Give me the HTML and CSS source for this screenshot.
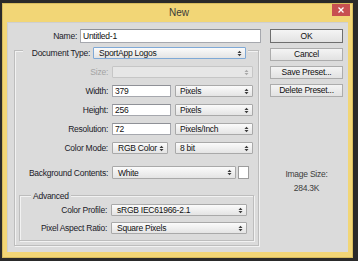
FILE: index.html
```html
<!DOCTYPE html>
<html>
<head>
<meta charset="utf-8">
<link rel="stylesheet" href="styles.css">
</head>
<body>
<div class="window">
  <div class="titlebar">
    <span></span>
    <span class="title">New</span>
    <span class="close"><svg width="6" height="6" viewBox="0 0 6 6"><path d="M0.5 0.5L5.5 5.5M5.5 0.5L0.5 5.5" stroke="#fff" stroke-width="1.3"/></svg></span>
  </div>
  <div class="content">
    <div class="left">
      <div class="namerow">
        <span class="lbl name-lbl">Name:</span>
        <div class="input name-input">Untitled-1</div>
      </div>
      <div class="group">
        <div class="legend doc-legend">
          <span class="lbl doc-lbl">Document Type:</span>
          <div class="sel focus doc-sel"><span>SportApp Logos</span><svg class="arr" width="5" height="7" viewBox="0 0 5 7"><path d="M0.5 3L2.5 0.8L4.5 3ZM0.5 4L2.5 6.2L4.5 4Z" fill="#3a3a3a"/></svg></div>
        </div>
        <div class="row r-size">
          <span class="lbl glbl disabled">Size:</span>
          <div class="sel dis w141"><span></span><svg class="arr" width="5" height="7" viewBox="0 0 5 7"><path d="M0.5 3L2.5 0.8L4.5 3ZM0.5 4L2.5 6.2L4.5 4Z" fill="#a8a8a8"/></svg></div>
        </div>
        <div class="row">
          <span class="lbl glbl">Width:</span>
          <div class="input num">379</div>
          <div class="sel unit"><span>Pixels</span><svg class="arr" width="5" height="7" viewBox="0 0 5 7"><path d="M0.5 3L2.5 0.8L4.5 3ZM0.5 4L2.5 6.2L4.5 4Z" fill="#3a3a3a"/></svg></div>
        </div>
        <div class="row">
          <span class="lbl glbl">Height:</span>
          <div class="input num">256</div>
          <div class="sel unit"><span>Pixels</span><svg class="arr" width="5" height="7" viewBox="0 0 5 7"><path d="M0.5 3L2.5 0.8L4.5 3ZM0.5 4L2.5 6.2L4.5 4Z" fill="#3a3a3a"/></svg></div>
        </div>
        <div class="row">
          <span class="lbl glbl">Resolution:</span>
          <div class="input num">72</div>
          <div class="sel unit"><span>Pixels/Inch</span><svg class="arr" width="5" height="7" viewBox="0 0 5 7"><path d="M0.5 3L2.5 0.8L4.5 3ZM0.5 4L2.5 6.2L4.5 4Z" fill="#3a3a3a"/></svg></div>
        </div>
        <div class="row">
          <span class="lbl glbl">Color Mode:</span>
          <div class="sel mode"><span>RGB Color</span><svg class="arr" width="5" height="7" viewBox="0 0 5 7"><path d="M0.5 3L2.5 0.8L4.5 3ZM0.5 4L2.5 6.2L4.5 4Z" fill="#3a3a3a"/></svg></div>
          <div class="sel unit"><span>8 bit</span><svg class="arr" width="5" height="7" viewBox="0 0 5 7"><path d="M0.5 3L2.5 0.8L4.5 3ZM0.5 4L2.5 6.2L4.5 4Z" fill="#3a3a3a"/></svg></div>
        </div>
        <div class="row r-bg">
          <span class="lbl glbl">Background Contents:</span>
          <div class="sel bgsel"><span>White</span><svg class="arr" width="5" height="7" viewBox="0 0 5 7"><path d="M0.5 3L2.5 0.8L4.5 3ZM0.5 4L2.5 6.2L4.5 4Z" fill="#3a3a3a"/></svg></div>
          <div class="swatch"></div>
        </div>
        <div class="advanced">
          <div class="legend adv-legend">Advanced</div>
          <div class="row r-prof">
            <span class="lbl albl">Color Profile:</span>
            <div class="sel prof"><span>sRGB IEC61966-2.1</span><svg class="arr" width="5" height="7" viewBox="0 0 5 7"><path d="M0.5 3L2.5 0.8L4.5 3ZM0.5 4L2.5 6.2L4.5 4Z" fill="#3a3a3a"/></svg></div>
          </div>
          <div class="row r-par">
            <span class="lbl albl">Pixel Aspect Ratio:</span>
            <div class="sel prof"><span>Square Pixels</span><svg class="arr" width="5" height="7" viewBox="0 0 5 7"><path d="M0.5 3L2.5 0.8L4.5 3ZM0.5 4L2.5 6.2L4.5 4Z" fill="#3a3a3a"/></svg></div>
          </div>
        </div>
      </div>
    </div>
    <div class="right">
      <div class="btn default">OK</div>
      <div class="btn">Cancel</div>
      <div class="btn">Save Preset...</div>
      <div class="btn">Delete Preset...</div>
      <div class="imgsize">
        <div>Image Size:</div>
        <div>284.3K</div>
      </div>
    </div>
  </div>
</div>
</body>
</html>
```
FILE: styles.css
```css
html, body {
  margin: 0;
  padding: 0;
}
body {
  background: #2a2a2a;
  width: 358px;
  height: 261px;
  overflow: hidden;
  font-family: "Liberation Sans", Arial, sans-serif;
  font-size: 8.5px;
  letter-spacing: -0.25px;
  line-height: 12px;
  color: #202028;
}
.window {
  margin: 3px 0 0 2px;
  width: 351px;
  height: 255px;
  box-sizing: border-box;
  background: #f2d676;
  border: 1px solid #d6bb5e;
  display: flex;
  flex-direction: column;
}
.titlebar {
  height: 18px;
  display: grid;
  grid-template-columns: 1fr auto 1fr;
  align-items: start;
}
.title {
  font-family: "Liberation Sans", Arial, sans-serif;
  font-size: 10px;
  letter-spacing: 0;
  line-height: 18px;
  color: #3a3a3a;
  padding-left: 3px;
}
.close {
  justify-self: end;
  margin-right: 2px;
  width: 18px;
  height: 12px;
  background: #c75050;
  display: flex;
  align-items: center;
  justify-content: center;
}
.close svg { display: block; }
.content {
  margin: 0 4px 0 4px;
  height: 230px;
  background: #dbdbdb;
  display: flex;
  box-shadow: inset 1px 1px 0 #cfcfcf;
}
.left {
  width: 254px;
  padding-top: 7px;
}
.lbl {
  text-align: right;
  white-space: nowrap;
  flex: none;
}
.disabled { color: #a3a3a3; }
.namerow {
  display: flex;
  align-items: center;
  height: 14px;
}
.name-lbl { width: 70px; margin-right: 3px; }
.input {
  box-sizing: border-box;
  background: #fff;
  border: 1px solid #a6a8ae;
  border-top-color: #8f9197;
  padding-left: 2px;
  color: #111;
  flex: none;
}
.name-input { width: 181px; height: 14px; line-height: 12px; }
.group {
  margin-top: 7px;
  margin-left: 7px;
  width: 245px;
  box-sizing: border-box;
  border: 1px solid #bdbdbd;
  box-shadow: inset 1px 1px 0 #f2f2f2, 1px 1px 0 #f2f2f2;
  padding-bottom: 4px;
}
.legend {
  background: #dbdbdb;
  width: fit-content;
}
.doc-legend {
  display: flex;
  align-items: center;
  margin-top: -4px;
  margin-left: 8px;
  height: 12px;
  padding-right: 2px;
}
.doc-lbl { width: 67px; margin-right: 3px; }
.sel {
  box-sizing: border-box;
  height: 12px;
  border: 1px solid #a9a9a9;
  border-radius: 1px;
  background: linear-gradient(#fbfbfb, #e4e4e4);
  display: flex;
  align-items: center;
  justify-content: space-between;
  padding: 0 3px 0 5px;
  color: #111;
  flex: none;
  white-space: nowrap;
}
.sel .arr { display: block; flex: none; }
.sel.focus { border-color: #7fa9d6; }
.sel.dis { background: #e6e6e6; border-color: #c6c6c6; }
.doc-sel { width: 153px; }
.row {
  display: flex;
  align-items: center;
  height: 12px;
  margin-top: 7px;
}
.glbl { width: 93px; margin-right: 4px; }
.albl { width: 87px; margin-right: 4px; }
.w141 { width: 141px; }
.num { width: 59px; height: 12px; line-height: 10px; margin-right: 4px; }
.unit { width: 78px; padding-left: 4px; }
.mode { width: 56px; margin-right: 7px; }
.r-bg { margin-top: 12px; height: 13px; }
.bgsel { width: 124px; margin-right: 2px; height: 13px; }
.swatch {
  width: 11px;
  height: 13px;
  box-sizing: border-box;
  background: #fff;
  border: 1px solid #9c9c9c;
}
.advanced {
  margin-top: 16px;
  margin-left: 4px;
  width: 235px;
  box-sizing: border-box;
  border: 1px solid #bdbdbd;
  box-shadow: inset 1px 1px 0 #f2f2f2, 1px 1px 0 #f2f2f2;
  padding-bottom: 6px;
}
.adv-legend {
  margin-top: -5px;
  margin-left: 11px;
  height: 10px;
  line-height: 10px;
  padding: 0 2px;
}
.r-prof { margin-top: 3px; }
.r-par { margin-top: 6px; }
.prof { width: 136px; }
.right {
  margin-left: 9px;
  width: 73px;
  padding-top: 7px;
  display: flex;
  flex-direction: column;
}
.btn {
  box-sizing: border-box;
  height: 13px;
  line-height: 11px;
  text-align: center;
  border: 1px solid #acacac;
  background: linear-gradient(#f4f4f4, #e2e2e2);
  color: #111;
  margin-bottom: 5px;
}
.btn.default {
  height: 14px;
  line-height: 12px;
  border-color: #6e6e6e;
}
.imgsize {
  margin-top: 65px;
  text-align: center;
  line-height: 14px;
  color: #3d3d3d;
}
```
